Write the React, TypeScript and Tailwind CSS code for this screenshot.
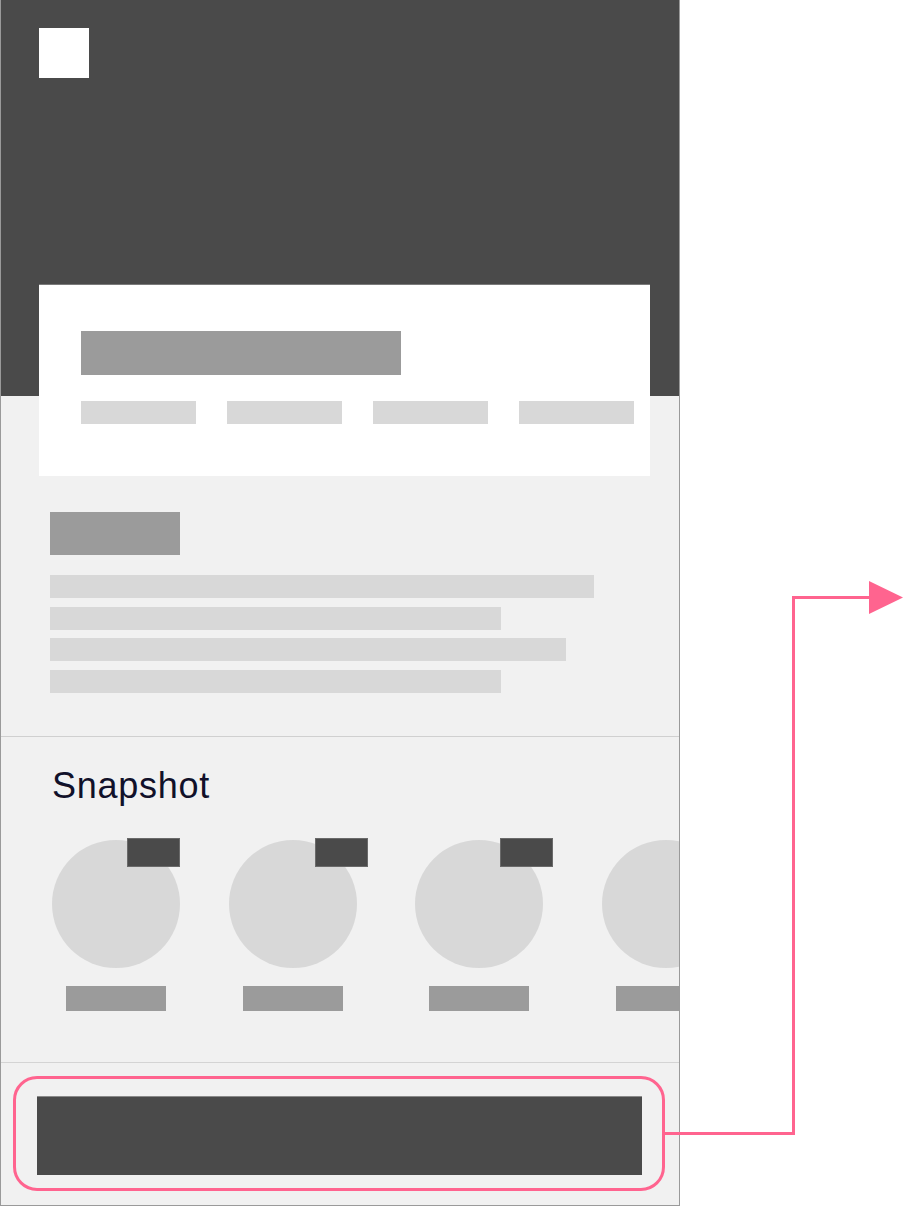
const lines = ['w-[544px]', 'w-[451px]', 'w-[516px]', 'w-[451px]'];

const chips = [0, 1, 2, 3];

const snapshots = [
  { key: 'a', itemClass: 'ml-0', badgeClass: 'left-[75px]', badge: true },
  { key: 'b', itemClass: 'ml-[49px]', badgeClass: 'left-[86px]', badge: true },
  { key: 'c', itemClass: 'ml-[58px]', badgeClass: 'left-[85px]', badge: true },
  { key: 'd', itemClass: 'ml-[59px]', badgeClass: 'left-0', badge: false },
];

const SnapshotItem = ({ itemClass, badgeClass, badge }: { itemClass: string; badgeClass: string; badge: boolean }) => {
  return (
    <div className={`flex w-[128px] shrink-0 flex-col items-center ${itemClass}`}>
      <div className="relative h-[128px] w-[128px]">
        <div className="h-full w-full rounded-full bg-[#d8d8d8]" />
        {badge && (
          <div className={`absolute top-[-2px] h-[29px] w-[53px] border border-[#6a6a6a] bg-[#4a4a4a] ${badgeClass}`} />
        )}
      </div>
      <div className="mt-[18px] h-[25px] w-[100px] shrink-0 bg-[#9b9b9b]" />
    </div>
  );
};

const App = () => {
  return (
    <div className="relative h-[1207px] w-[903px] overflow-hidden bg-white font-['Liberation_Sans',Arial,sans-serif]">
      <div className="flex h-[1206px] w-[680px] flex-col overflow-hidden border-x border-b border-[#9a9a9a] bg-[#f1f1f1]">
        {/* header */}
        <header className="h-[396px] shrink-0 bg-[#4a4a4a] pl-[38px] pt-[28px]">
          <div className="h-[50px] w-[50px] bg-white" />
        </header>

        {/* intro */}
        <section className="flex flex-col border-b border-[#d0d0d0] pb-[43px]">
          <div className="relative ml-[38px] mt-[-112px] h-[192px] w-[611px] border-t border-[#7a7a7a] bg-white pl-[42px] pr-[14px] pt-[46px]">
            <div className="h-[44px] w-[320px] bg-[#9b9b9b]" />
            <div className="mt-[26px] flex gap-[31px]">
              {chips.map((c) => (
                <div key={`chip-${c}`} className="h-[23px] w-[115px] shrink-0 bg-[#d8d8d8]" />
              ))}
            </div>
          </div>
          <div className="ml-[49px] mt-[36px] h-[43px] w-[130px] bg-[#9b9b9b]" />
          <div className="ml-[49px] mt-[20px] flex flex-col gap-[8.5px]">
            {lines.map((w, i) => (
              <div key={`line-${i}`} className={`h-[23px] bg-[#d8d8d8] ${w}`} />
            ))}
          </div>
        </section>

        {/* snapshot */}
        <section className="border-b border-[#d4d4d4] pb-[51px] pt-[29px]">
          <h2 className="ml-[51px] text-[36px] leading-[40px] tracking-[0.02em] text-[#11112a]">Snapshot</h2>
          <div className="mt-[34px] flex pl-[51px]">
            {snapshots.map((s) => (
              <SnapshotItem key={s.key} itemClass={s.itemClass} badgeClass={s.badgeClass} badge={s.badge} />
            ))}
          </div>
        </section>

        {/* action */}
        <section className="flex-1 px-[36px] pt-[33px]">
          <div className="h-[79px] w-[605px] border-t border-[#8a8a8a] bg-[#4a4a4a]" />
        </section>
      </div>

      {/* annotation */}
      <div className="pointer-events-none absolute left-[13px] top-[1076px] h-[115px] w-[652px] rounded-[24px] border-[3px] border-[#ff648f]" />
      <svg className="pointer-events-none absolute left-0 top-0" width="903" height="1207" viewBox="0 0 903 1207">
        <path d="M664 1133.5 H793.5 V597.5 H872" fill="none" stroke="#ff648f" strokeWidth="3" />
        <polygon points="869,581 903,597.5 869,614" fill="#ff648f" />
      </svg>
    </div>
  );
};

export default App;
